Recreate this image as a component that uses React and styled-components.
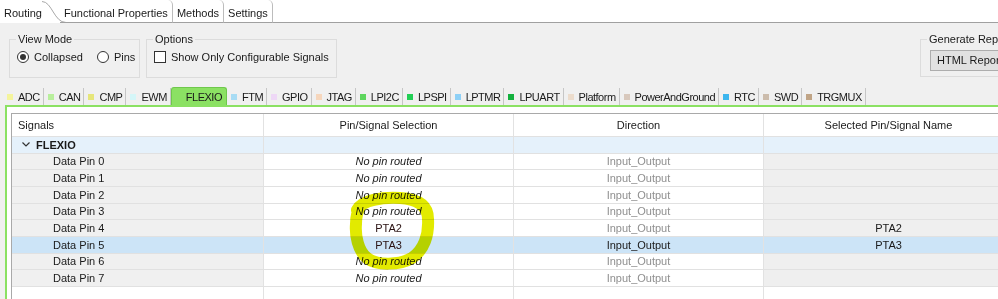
import React from 'react'
import styled, { createGlobalStyle } from 'styled-components'

const GlobalStyle = createGlobalStyle`
  body {
    margin: 0;
    font-family: "Liberation Sans", Arial, sans-serif;
    font-size: 11px;
    color: #1a1a1a;
  }
`

const Root = styled.div`
  position: relative;
  width: 998px;
  height: 299px;
  overflow: hidden;
  background: #f0f0f0;
`

/* ---------- top editor tabs ---------- */

const TopTabs = styled.div`
  display: flex;
  height: 23px;
  background: #fff;
`

const TopTab = styled.div`
  box-sizing: border-box;
  height: 23px;
  padding: 3px ${({ $selected }) => ($selected ? 0 : 4)}px 0 4px;
  line-height: 20px;
  white-space: nowrap;
  border-bottom: ${({ $selected }) => ($selected ? 'none' : '1px solid #a0a0a0')};
  border-right: ${({ $selected }) => ($selected ? 'none' : '1px solid #bcbcbc')};
  border-top-right-radius: ${({ $selected }) => ($selected ? 0 : 5)}px;
`

const TabCurve = styled.svg`
  display: block;
  flex: none;
  margin-right: -8px;
`

const TopFiller = styled.div`
  flex: 1;
  border-bottom: 1px solid #a0a0a0;
`

/* ---------- option groups ---------- */

const OptionsRow = styled.div`
  display: flex;
  align-items: flex-start;
  gap: 6px;
  padding: 10px 0 0 9px;
`

const Group = styled.fieldset`
  box-sizing: border-box;
  width: ${({ $w }) => $w}px;
  min-width: 0;
  margin: 0;
  padding: 0 6px ${({ $pb }) => $pb ?? 9}px;
  border: 1px solid #dcdcdc;
  ${({ $right }) => ($right ? 'margin-left: auto; margin-right: -24px;' : '')}
`

const Legend = styled.legend`
  padding: 0 2px;
  line-height: 13px;
  font-size: 11px;
  white-space: nowrap;
`

const ControlRow = styled.div`
  display: flex;
  align-items: center;
  height: 22px;
`

const Choice = styled.label`
  display: flex;
  align-items: center;
  gap: 5px;
  margin-left: 1px;
  margin-right: ${({ $mr }) => $mr ?? 0}px;
  white-space: nowrap;
`

const Radio = styled.span`
  box-sizing: border-box;
  width: 12px;
  height: 12px;
  border-radius: 50%;
  border: 1px solid #333;
  background: #fff;
  display: flex;
  align-items: center;
  justify-content: center;

  &::after {
    content: '';
    width: 6px;
    height: 6px;
    border-radius: 50%;
    background: ${({ $checked }) => ($checked ? '#333' : 'transparent')};
  }
`

const Check = styled.span`
  box-sizing: border-box;
  width: 12px;
  height: 12px;
  border: 1px solid #333;
  background: #fff;
`

const ReportButton = styled.div`
  box-sizing: border-box;
  height: 21px;
  margin: 4px 0 0 3px;
  padding: 0 6px;
  line-height: 19px;
  background: #e1e1e1;
  border: 1px solid #adadad;
  white-space: nowrap;
`

/* ---------- peripheral tab folder ---------- */

const TabFolder = styled.div`
  margin: 9px 0 0 5px;
`

const TabRow = styled.div`
  display: flex;
  height: 18px;
  margin-left: -2px;
  letter-spacing: -0.5px;
`

const PeriphTab = styled.div`
  box-sizing: border-box;
  display: flex;
  align-items: center;
  gap: 5px;
  white-space: nowrap;
  padding: ${({ $selected }) => ($selected ? '0 4px 0 3px' : '0 3px 0 4px')};
  margin-top: ${({ $selected }) => ($selected ? 0 : 1)}px;
  background: ${({ $selected }) => ($selected ? '#8be163' : 'transparent')};
  border: ${({ $selected }) => ($selected ? '1px solid #6fc84c' : 'none')};
  border-bottom: none;
  border-right: ${({ $selected }) => ($selected ? '1px solid #6fc84c' : '1px solid #c6c6c6')};
  border-radius: ${({ $selected }) => ($selected ? '3px 3px 0 0' : '0')};
`

const Swatch = styled.span`
  width: 6px;
  height: 6px;
  background: ${({ $c }) => $c};
`

const FolderBody = styled.div`
  background: #fff;
  border-top: 2px solid #8be163;
  border-left: 2px solid #8be163;
  padding: 6px 0 0 4px;
  height: 200px;
`

/* ---------- signals table ---------- */

const Table = styled.div`
  width: 1010px;
  border-top: 1px solid #a9a9a9;
  border-left: 1px solid #a9a9a9;
`

const Row = styled.div`
  display: grid;
  grid-template-columns: 252px 250px 250px 250px;
  box-sizing: border-box;
  height: ${({ $h }) => $h}px;
  border-bottom: ${({ $line }) => ($line ? '1px solid #e1e1e1' : 'none')};
  background: ${({ $bg }) => $bg || 'transparent'};
`

const Cell = styled.div`
  display: flex;
  align-items: center;
  justify-content: ${({ $align }) => $align || 'center'};
  padding-left: ${({ $pl }) => $pl || 0}px;
  border-right: 1px solid #e2e2e2;
  background: ${({ $bg }) => $bg || 'transparent'};
  color: ${({ $color }) => $color || '#1a1a1a'};
  font-style: ${({ $italic }) => ($italic ? 'italic' : 'normal')};
  font-weight: ${({ $bold }) => ($bold ? 'bold' : 'normal')};
  white-space: nowrap;
  gap: 6px;
`

const Highlight = styled.svg`
  position: absolute;
  left: 340px;
  top: 186px;
  mix-blend-mode: multiply;
  pointer-events: none;
`

const periphTabs = [
  ['ADC', '#f4f49c'],
  ['CAN', '#b8ef9c'],
  ['CMP', '#e6e67a'],
  ['EWM', '#d4f6f8'],
  ['FLEXIO', '#8be163'],
  ['FTM', '#a8dcf4'],
  ['GPIO', '#eed8f6'],
  ['JTAG', '#f6d6bc'],
  ['LPI2C', '#5ed65e'],
  ['LPSPI', '#22cf55'],
  ['LPTMR', '#8ed0f6'],
  ['LPUART', '#13b03e'],
  ['Platform', '#ecdccc'],
  ['PowerAndGround', '#d8c8bc'],
  ['RTC', '#3cb6ee'],
  ['SWD', '#ccbcac'],
  ['TRGMUX', '#c0a486'],
]

const pins = [
  { name: 'Data Pin 0' },
  { name: 'Data Pin 1' },
  { name: 'Data Pin 2' },
  { name: 'Data Pin 3' },
  { name: 'Data Pin 4', pin: 'PTA2' },
  { name: 'Data Pin 5', pin: 'PTA3', selected: true },
  { name: 'Data Pin 6' },
  { name: 'Data Pin 7' },
]

const ROW_H = 16.67

export default function App() {
  return (
    <Root>
      <GlobalStyle />
      <TopTabs>
        <TopTab $selected>Routing</TopTab>
        <TabCurve width="26" height="23" viewBox="0 0 26 23">
          <path d="M0 1.5 C10 1.5 12 22.5 24 22.5 L26 22.5" fill="#fff" stroke="#a8a8a8" strokeWidth="1" />
        </TabCurve>
        <TopTab>Functional Properties</TopTab>
        <TopTab>Methods</TopTab>
        <TopTab>Settings</TopTab>
        <TopFiller />
      </TopTabs>

      <OptionsRow>
        <Group $w={131}>
          <Legend>View Mode</Legend>
          <ControlRow>
            <Choice $mr={13}>
              <Radio $checked />
              Collapsed
            </Choice>
            <Choice>
              <Radio />
              Pins
            </Choice>
          </ControlRow>
        </Group>
        <Group $w={191}>
          <Legend>Options</Legend>
          <ControlRow>
            <Choice>
              <Check />
              Show Only Configurable Signals
            </Choice>
          </ControlRow>
        </Group>
        <Group $w={102} $pb={5} $right>
          <Legend>Generate Report</Legend>
          <ReportButton>HTML Report</ReportButton>
        </Group>
      </OptionsRow>

      <TabFolder>
        <TabRow>
          {periphTabs.map(([label, color]) => (
            <PeriphTab key={label} $selected={label === 'FLEXIO'}>
              <Swatch $c={color} />
              {label}
            </PeriphTab>
          ))}
        </TabRow>
        <FolderBody>
          <Table>
            <Row $h={23} $line $bg="#fff">
              <Cell $align="flex-start" $pl={6}>Signals</Cell>
              <Cell>Pin/Signal Selection</Cell>
              <Cell>Direction</Cell>
              <Cell>Selected Pin/Signal Name</Cell>
            </Row>
            <Row $h={ROW_H} $line $bg="#e5f1fb">
              <Cell $align="flex-start" $pl={10} $bold>
                <svg width="8" height="5" viewBox="0 0 8 5">
                  <path d="M0.5 0.5 L4 4 L7.5 0.5" fill="none" stroke="#333" strokeWidth="1.2" />
                </svg>
                FLEXIO
              </Cell>
              <Cell />
              <Cell />
              <Cell />
            </Row>
            {pins.map((p) => (
              <Row key={p.name} $h={ROW_H} $line $bg={p.selected ? '#cce4f7' : '#fff'}>
                <Cell $align="flex-start" $pl={41} $bg={p.selected ? undefined : '#f0f0f0'}>
                  {p.name}
                </Cell>
                {p.pin ? (
                  <Cell $color="#2a1212">{p.pin}</Cell>
                ) : (
                  <Cell $italic>No pin routed</Cell>
                )}
                <Cell $color={p.selected ? '#1a1a1a' : '#8f8f8f'}>Input_Output</Cell>
                <Cell $bg={p.selected ? undefined : '#efefef'}>{p.pin || ''}</Cell>
              </Row>
            ))}
            <Row $h={30} $bg="#fff">
              <Cell />
              <Cell />
              <Cell />
              <Cell />
            </Row>
          </Table>
        </FolderBody>
      </TabFolder>

      <Highlight width="110" height="90" viewBox="0 0 110 90">
        <path
          d="M17 24 C22 14 42 11 60 12 C77 13 88 19 88 33 C89 49 84 64 72 72 C60 79 37 80 27 72 C18 65 15 49 16 38 C16 30 17 26 20 21"
          fill="none"
          stroke="#e2ea00"
          strokeWidth="12"
          strokeLinecap="round"
          strokeLinejoin="round"
        />
      </Highlight>
    </Root>
  )
}
